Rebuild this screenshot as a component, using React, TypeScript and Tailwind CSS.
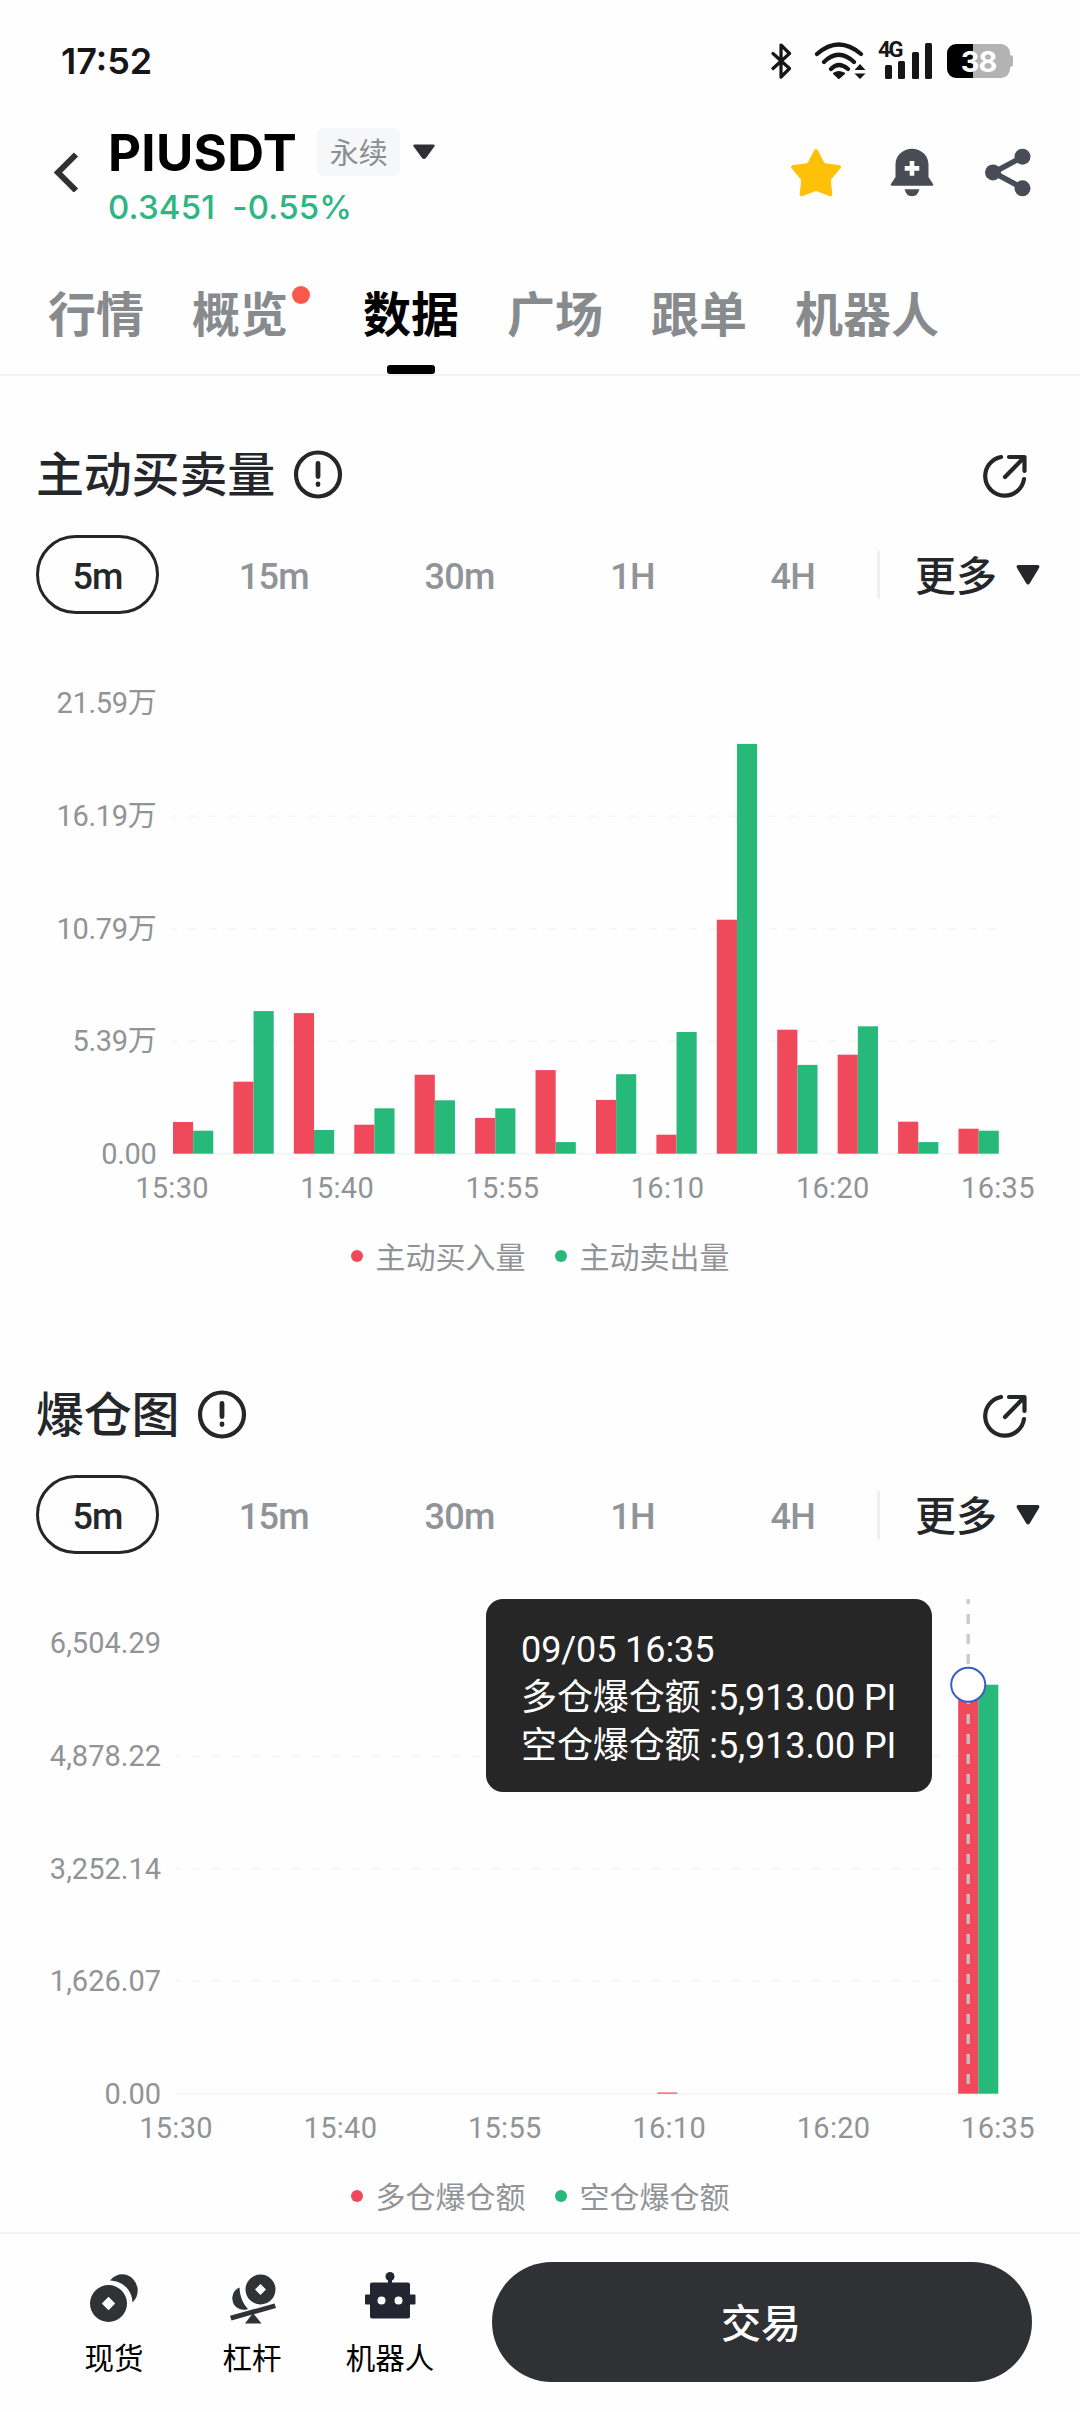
import type { ReactNode } from 'react'
import clsx from 'clsx'

type Group = { buy: number; sell: number }

type ChartProps = {
  title: string
  yLabels: string[]
  groups: Group[]
  legend: [string, string]
  // distance from the screen edge to the first bar
  plotLeft: number
  axisClass: string
  xAxisClass: string
  selected?: number
  tooltip?: ReactNode
}

const PLOT_RIGHT = 998.3
const BASELINE = 494.7
const ROW_STEP = 112.5

const tabs = [
  { label: '行情' },
  { label: '概览', dot: true },
  { label: '数据', active: true },
  { label: '广场' },
  { label: '跟单' },
  { label: '机器人' },
]

const intervals = ['5m', '15m', '30m', '1H', '4H']
const times = ['15:30', '15:40', '15:55', '16:10', '16:20', '16:35']

// bar heights in px above the baseline
const takerVolume: Group[] = [
  { buy: 31.7, sell: 23 },
  { buy: 72, sell: 142.6 },
  { buy: 140.6, sell: 23.7 },
  { buy: 29, sell: 45.4 },
  { buy: 79, sell: 53.4 },
  { buy: 35.8, sell: 45.4 },
  { buy: 83.6, sell: 11.6 },
  { buy: 53.8, sell: 79.5 },
  { buy: 19, sell: 121.7 },
  { buy: 234, sell: 409.8 },
  { buy: 124, sell: 88.8 },
  { buy: 99, sell: 127.4 },
  { buy: 32, sell: 11.6 },
  { buy: 25, sell: 23 },
]

const liquidations: Group[] = Array.from({ length: 14 }, (_, i) => {
  if (i === 8) return { buy: 1.2, sell: 0 }
  if (i === 13) return { buy: 409, sell: 409 }
  return { buy: 0, sell: 0 }
})

function StatusBar() {
  return (
    <div className="flex h-[122px] items-center pl-[61px] pr-[67px] text-[#161616]">
      <span className="font-['Inter'] text-[36px] font-semibold leading-none">17:52</span>
      <div className="ml-auto flex items-center">
        <svg width="22" height="36" viewBox="0 0 22 36" fill="none" stroke="currentColor" strokeWidth="3.2" strokeLinejoin="round" strokeLinecap="round">
          <path d="M2 10.5 18.5 25.5 10 34V2l8.5 8.5L2 25.5" />
        </svg>
        <svg className="ml-[21px]" width="54" height="38" viewBox="0 0 54 38" fill="none" stroke="currentColor" strokeWidth="4.2" strokeLinecap="round">
          <path d="M3 12Q24.5-7 47 12M10 20Q24.5 5.5 40 20M17 27Q24.5 19 34 27" />
          <path d="M20 31.5Q24.5 28.5 30 31.5L24.8 36Z" fill="currentColor" strokeWidth="2" strokeLinejoin="round" />
          <path d="M40.5 28 46 22 51.5 28ZM40.5 31.5H51.5L46 37Z" fill="currentColor" stroke="none" />
        </svg>
        <div className="relative ml-[17px] h-9 w-[47px]">
          <span className="absolute -left-[7px] -top-[3px] font-['Roboto'] text-[22px] font-bold leading-[20px] tracking-[-2px]">4G</span>
          <div className="flex h-full items-end justify-between">
            <i className="h-3.5 w-[7px] rounded-[1.5px] bg-current" />
            <i className="h-[18px] w-[7px] rounded-[1.5px] bg-current" />
            <i className="h-[27px] w-[7px] rounded-[1.5px] bg-current" />
            <i className="h-9 w-[7px] rounded-[1.5px] bg-current" />
          </div>
        </div>
        <div className="ml-[15px] flex items-center">
          <div className="flex h-[34px] w-[63px] items-center justify-center rounded-[9px] bg-[linear-gradient(90deg,#000_26px,#b3b3b3_26px)] font-['Inter'] text-[29px] font-bold leading-none tracking-[-1px] text-white">
            38
          </div>
          <i className="h-3 w-[3px] rounded-r-full bg-[#b3b3b3]" />
        </div>
      </div>
    </div>
  )
}

function Header() {
  return (
    <header className="flex h-[100px] pl-[53px] pr-12">
      <svg className="mt-[30px]" width="26" height="40" viewBox="0 0 26 40" fill="none" stroke="#303033" strokeWidth="6">
        <path d="M23 2.5 5 20.5 23 38.5" />
      </svg>
      <div className="ml-[29px]">
        <div className="mt-1.5 flex h-12 items-center">
          <h1 className="font-['Inter'] text-[51px] font-bold leading-none tracking-[0.3px] text-black">PIUSDT</h1>
          <span className="ml-5 flex h-12 w-[83px] items-center justify-center rounded-md bg-[#f5f7f9] pb-0.5 text-[29px] leading-none text-[#8b8d90]">
            永续
          </span>
          <svg className="ml-3" width="24" height="16" viewBox="0 0 24 16" fill="#303033">
            <path d="M3 0.5H21Q24 0.5 22 3L14 14Q12 16 10 14L2 3Q0 0.5 3 0.5Z" />
          </svg>
        </div>
        <p className="mt-3.5 flex gap-[17px] font-['Inter'] text-[33px] font-medium leading-[34px] tracking-[0.2px] text-[#2eb582]">
          <span>0.3451</span>
          <span>-0.55%</span>
        </p>
      </div>
      <div className="ml-auto mt-[26px] flex text-[#474c55]">
        <svg width="52" height="50" viewBox="0 0 52 50" fill="#ffc107" stroke="#ffc107" strokeWidth="3.5" strokeLinejoin="round">
          <path d="M26 2.8 33.5 16.8 49.3 19 39 31.5 40.5 46.5 26 41 11.5 46.5 13 31.5 2.7 19 18.5 16.8Z" />
        </svg>
        <svg className="ml-12" width="44" height="50" viewBox="0 0 44 50" fill="currentColor">
          <path
            fillRule="evenodd"
            d="M22 .7C12.8.7 5.5 7.5 5.5 16.5V29L.8 36.2Q.3 37.7 1.8 37.7H42.2Q43.7 37.7 43.2 36.2L38.5 29V16.5C38.5 7.5 31.2.7 22 .7ZM19.7 13V18H14.7V22.7H19.7V27.7H24.3V22.7H29.3V18H24.3V13Z"
          />
          <path d="M14.7 41.2H29.3Q28 48.2 22 48.2T14.7 41.2Z" />
        </svg>
        <svg className="ml-[50px]" width="48" height="50" viewBox="0 0 48 50" fill="currentColor">
          <path d="M38.5 9 9.5 24.5 38.5 40" fill="none" stroke="currentColor" strokeWidth="5.5" />
          <circle cx="38.5" cy="8.7" r="8" />
          <circle cx="9" cy="24.4" r="8" />
          <circle cx="38.5" cy="40.3" r="8" />
        </svg>
      </div>
    </header>
  )
}

function Tabs() {
  return (
    <nav className="flex h-[154px] gap-12 border-b-2 border-[#f1f2f3] pl-12 pt-[60px] text-[48px] font-bold leading-[58px]">
      {tabs.map((tab) => (
        <div
          key={tab.label}
          className={clsx('flex flex-col items-center', tab.active ? 'text-black' : 'text-[#888b8e]', tab.dot && 'mr-[27px]')}
        >
          <span className="relative">
            {tab.label}
            {tab.dot && <i className="absolute -right-[22px] top-1 size-[18px] rounded-full bg-[#f9584b]" />}
          </span>
          {tab.active && <i className="mt-[25px] h-[9px] w-12 rounded-[3px] bg-black" />}
        </div>
      ))}
    </nav>
  )
}

function IntervalPicker() {
  return (
    <div className="flex h-[79px] items-center pl-9 pr-10 text-[#25262a]">
      <div className="flex w-[815px] items-center justify-between font-['Roboto'] text-[36px] font-medium leading-none tracking-[-0.8px]">
        {intervals.map((name, i) => (
          <span
            key={name}
            className={clsx(
              'flex h-[79px] items-center justify-center pt-1',
              i === 0 ? 'w-[123px] rounded-full border-[3px] border-[#25262a]' : 'px-[36px] text-[#909398]',
            )}
          >
            {name}
          </span>
        ))}
      </div>
      <i className="ml-[26px] h-12 w-[3px] bg-[#eeeff1]" />
      <span className="ml-[35px] pb-[3px] text-[41px] font-medium leading-none">更多</span>
      <svg className="ml-auto" width="24" height="20" viewBox="0 0 24 20" fill="currentColor">
        <path d="M3 0H21Q24.5 0 23 3L14 18Q12 21 10 18L1 3Q-.5 0 3 0Z" />
      </svg>
    </div>
  )
}

function Dot({ color }: { color: string }) {
  return <i className={clsx('mr-[13px] size-3 rounded-full', color)} />
}

function ChartSection({ title, yLabels, groups, legend, plotLeft, axisClass, xAxisClass, selected, tooltip }: ChartProps) {
  const width = PLOT_RIGHT - plotLeft
  const pitch = (width * 3) / (groups.length * 3 - 1)
  const bar = pitch / 3

  return (
    <section className="pt-[68px]">
      <div className="flex h-[60px] items-center pl-9 pr-[51px] text-[#25262a]">
        <h2 className="pb-1.5 text-[48px] font-medium leading-none tracking-[-0.2px]">{title}</h2>
        <svg className="ml-[18px]" width="50" height="50" viewBox="0 0 50 50" fill="none" stroke="currentColor" strokeWidth="4.2" strokeLinecap="round">
          <circle cx="25" cy="25.5" r="22" />
          <path d="M25 14.5V27.5M25 35V35.5" strokeWidth="4.8" />
        </svg>
        <svg className="ml-auto" width="48" height="48" viewBox="0 0 48 48" fill="none" stroke="currentColor" strokeWidth="4.2" strokeLinecap="round" strokeLinejoin="round">
          <path d="M20 7A19.5 19.5 0 1 0 43 29M24 27 43 7.5M28 7H43.5V21" />
        </svg>
      </div>

      <div className="mt-[31px]">
        <IntervalPicker />
      </div>

      <div className="relative mt-[45px] flex h-[512px]">
        <div
          className={clsx(
            "flex shrink-0 flex-col items-end justify-between pt-[28px] pb-px font-['Roboto','Noto_Sans_CJK_SC',sans-serif] text-[29px] leading-8 text-[#919497]",
            axisClass,
          )}
        >
          {yLabels.map((label) => (
            <span key={label} className="h-8 whitespace-nowrap">{label}</span>
          ))}
        </div>
        <svg className="overflow-visible" width={width} height="496">
          {[1, 2, 3].map((n) => (
            <line
              key={n}
              x1="0"
              x2={width}
              y1={BASELINE - n * ROW_STEP}
              y2={BASELINE - n * ROW_STEP}
              stroke="#f3f4f5"
              strokeWidth="1.5"
              strokeDasharray="8 12"
              strokeDashoffset="4"
            />
          ))}
          <line x1="0" x2={width} y1={BASELINE} y2={BASELINE} stroke="#f5f6f7" strokeWidth="2" />
          {groups.map((g, i) => (
            <g key={i}>
              <rect x={i * pitch} y={BASELINE - g.buy} width={bar} height={g.buy} fill="#f0495c" />
              <rect x={i * pitch + bar} y={BASELINE - g.sell} width={bar} height={g.sell} fill="#27b97a" />
            </g>
          ))}
          {selected !== undefined && (
            <>
              <line
                x1={selected * pitch + bar / 2}
                x2={selected * pitch + bar / 2}
                y1="0"
                y2={BASELINE - 8}
                stroke="#c6c6c6"
                strokeOpacity="0.9"
                strokeWidth="3.5"
                strokeDasharray="10 10"
                strokeDashoffset="5"
              />
              <circle
                cx={selected * pitch + bar / 2}
                cy={BASELINE - groups[selected].buy}
                r="17"
                fill="#fff"
                stroke="#3b5cc4"
                strokeWidth="2"
              />
            </>
          )}
        </svg>
        {tooltip}
      </div>

      <div className={clsx("mr-8 flex justify-between font-['Roboto'] text-[29px] leading-[34px] tracking-[0.3px] text-[#919497]", xAxisClass)}>
        {times.map((time) => (
          <span key={time} className="w-[100px] text-center">{time}</span>
        ))}
      </div>

      <div className="mt-[35px] flex h-8 items-center justify-center text-[30px] text-[#919497]">
        <Dot color="bg-[#f0495c]" />
        <span className="mr-[29px] pb-[3px] leading-[30px]">{legend[0]}</span>
        <Dot color="bg-[#27b97a]" />
        <span className="pb-[3px] leading-[30px]">{legend[1]}</span>
      </div>
    </section>
  )
}

function Tooltip() {
  return (
    <div className="absolute left-[485.5px] top-0 h-[193px] w-[446.5px] rounded-[17px] bg-[#262626] pl-[35.5px] pt-[27px] font-['Roboto','Noto_Sans_CJK_SC',sans-serif] text-[36px] leading-[48px] tracking-[-0.1px] whitespace-nowrap text-white">
      <p>09/05 16:35</p>
      <p>多仓爆仓额 :5,913.00 PI</p>
      <p>空仓爆仓额 :5,913.00 PI</p>
    </div>
  )
}

function CoinsIcon() {
  return (
    <svg width="50" height="52" viewBox="0 0 50 52" fill="#303236">
      <path fillRule="evenodd" d="M19.5 13A18.5 18.5 0 1 1 19.5 50A18.5 18.5 0 1 1 19.5 13ZM19.5 24.8 12.8 31.5 19.5 38.2 26.2 31.5Z" />
      <path d="M21 8.5C25 4 29 2.3 33 2.3A16 16 0 0 1 48.7 18.5C48.7 23 47 27 43.5 30.5C43 18 34 9 21 8.5Z" />
    </svg>
  )
}

function LeverIcon() {
  return (
    <svg width="50" height="52" viewBox="0 0 50 52" fill="#303236">
      <path fillRule="evenodd" d="M33.5 2.5A15 15 0 1 1 33.5 32.5A15 15 0 1 1 33.5 2.5ZM33.5 12 28 17.5 33.5 23 39 17.5Z" />
      <path d="M12.5 15.5A11.5 11.5 0 1 0 21 37C16.5 32 13 26 12.5 15.5Z" />
      <path d="M3 43.8 47.5 31.5 49 36 4.5 48.5Z" />
      <path d="M26 41 34.5 51.5H18Z" />
    </svg>
  )
}

function RobotIcon() {
  return (
    <svg width="52" height="52" viewBox="0 0 52 52" fill="#232630">
      <circle cx="26" cy="4.5" r="4.5" />
      <path d="M24 7H28V12H24Z" />
      <path
        fillRule="evenodd"
        d="M8 10.5H44Q46 10.5 46 12.5V22.5H50.5Q51.5 22.5 51.5 23.5V31.5Q51.5 32.5 50.5 32.5H46V44.5Q46 46.5 44 46.5H8Q6 46.5 6 44.5V32.5H2Q1 32.5 1 31.5V23.5Q1 22.5 2 22.5H6V12.5Q6 10.5 8 10.5ZM17.5 24.5A4 4 0 1 0 17.5 32.5A4 4 0 1 0 17.5 24.5ZM34.5 24.5A4 4 0 1 0 34.5 32.5A4 4 0 1 0 34.5 24.5Z"
      />
    </svg>
  )
}

const shortcuts = [
  { label: '现货', icon: <CoinsIcon /> },
  { label: '杠杆', icon: <LeverIcon /> },
  { label: '机器人', icon: <RobotIcon /> },
]

function BottomBar() {
  return (
    <footer className="mt-auto flex h-[180px] border-t-2 border-[#f1f2f3] bg-[#fefefe] pl-[45px]">
      {shortcuts.map((item) => (
        <div key={item.label} className="flex w-[138px] flex-col items-center pt-[38px] text-[29.5px] leading-8 text-black">
          {item.icon}
          <span className="mt-4">{item.label}</span>
        </div>
      ))}
      <button className="ml-[33px] mt-7 h-[120px] w-[540px] rounded-full bg-[#303135] pb-[3px] pr-0.5 text-[40px] font-medium text-white">
        交易
      </button>
    </footer>
  )
}

export default function App() {
  return (
    <div className="flex h-[2412px] w-[1080px] flex-col overflow-hidden bg-[#fefefe] font-['Noto_Sans_CJK_SC',sans-serif]">
      <StatusBar />
      <Header />
      <Tabs />
      <main>
        <ChartSection
          title="主动买卖量"
          yLabels={['21.59万', '16.19万', '10.79万', '5.39万', '0.00']}
          groups={takerVolume}
          legend={['主动买入量', '主动卖出量']}
          plotLeft={172.5}
          axisClass="w-[172.5px] pr-[16px] tracking-[-0.3px]"
          xAxisClass="ml-[122px]"
        />
        <div className="h-11" />
        <ChartSection
          title="爆仓图"
          yLabels={['6,504.29', '4,878.22', '3,252.14', '1,626.07', '0.00']}
          groups={liquidations}
          legend={['多仓爆仓额', '空仓爆仓额']}
          plotLeft={176}
          axisClass="w-[176px] pr-[15px]"
          xAxisClass="ml-[126px]"
          selected={13}
          tooltip={<Tooltip />}
        />
      </main>
      <BottomBar />
    </div>
  )
}
